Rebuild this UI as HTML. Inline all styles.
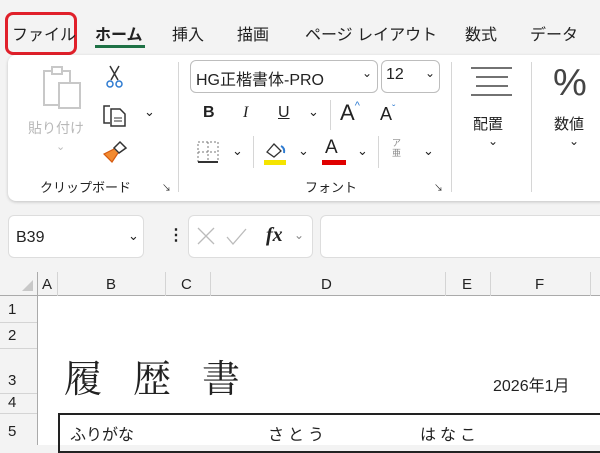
<!DOCTYPE html>
<html><head><meta charset="utf-8"><style>
*{margin:0;padding:0;box-sizing:border-box}
body{width:600px;height:445px;overflow:hidden;background:#f3f3f3;font-family:"Liberation Sans","Noto Sans CJK JP",sans-serif;color:#222;position:relative}
.a{position:absolute;white-space:nowrap}
.tab{font-size:16px;top:21px}
.sep{position:absolute;width:1px;background:#d6d6d6}
.box{position:absolute;background:#fff;border:1px solid #bdbdbd;border-radius:6px}
.hl{position:absolute;background:#d4d4d4}
</style></head><body>
<div class="a" style="left:5px;top:12px;width:72px;height:43px;border:3px solid #e0202a;border-radius:8px"></div>
<div class="a tab" style="left:12px">ファイル</div>
<div class="a tab" style="left:95px;font-weight:bold">ホーム</div>
<div class="a" style="left:95px;top:45px;width:50px;height:3px;background:#1e7145"></div>
<div class="a tab" style="left:172px">挿入</div>
<div class="a tab" style="left:237px">描画</div>
<div class="a tab" style="left:305px">ページ レイアウト</div>
<div class="a tab" style="left:465px">数式</div>
<div class="a tab" style="left:530px">データ</div>
<div class="a" style="left:8px;top:55px;width:600px;height:146px;background:#fff;border-radius:8px;box-shadow:0 1px 3px rgba(0,0,0,.2)"></div>
<div class="sep" style="left:178px;top:62px;height:130px"></div>
<div class="sep" style="left:451px;top:62px;height:130px"></div>
<div class="sep" style="left:531px;top:62px;height:130px"></div>
<svg class="a" style="left:40px;top:65px" width="45" height="45"><rect x="4" y="6" width="26" height="34" fill="none" stroke="#c8c8c8" stroke-width="2"/><rect x="12" y="2" width="10" height="7" fill="#fff" stroke="#c8c8c8" stroke-width="2"/><rect x="19" y="18" width="21" height="25" fill="#fff" stroke="#c8c8c8" stroke-width="2"/></svg>
<div class="a" style="left:28px;top:118px;font-size:14px;color:#b8b8b8">貼り付け</div>
<div class="a" style="left:56px;top:140px;font-size:11px;color:#bbb">⌄</div>
<svg class="a" style="left:104px;top:65px" width="22" height="24"><path d="M6 1 L14 15 M15 1 L7 15" stroke="#333" stroke-width="1.5" fill="none"/><circle cx="6" cy="19" r="3" fill="none" stroke="#2e7bd1" stroke-width="1.5"/><circle cx="15" cy="19" r="3" fill="none" stroke="#2e7bd1" stroke-width="1.5"/></svg>
<svg class="a" style="left:102px;top:103px" width="26" height="24"><path d="M8 3 H2 V20 H8" fill="none" stroke="#333" stroke-width="1.5"/><path d="M9 6 H18 L23 11 V23 H9 Z" fill="#fff" stroke="#333" stroke-width="1.5"/><path d="M12 15 H20 M12 18 H20" stroke="#333"/></svg>
<div class="a" style="left:144px;top:104px;font-size:13px">⌄</div>
<svg class="a" style="left:102px;top:140px" width="26" height="24"><path d="M18 2 L24 8 L17 13 L12 8 Z" fill="#fff" stroke="#333" stroke-width="1.5"/><path d="M12 9 L2 14 L10 22 L16 13" fill="#f28a30" stroke="#d55a10" stroke-width="1.2"/></svg>
<div class="a" style="left:40px;top:177px;font-size:13px">クリップボード</div>
<div class="a" style="left:162px;top:181px;font-size:9px">↘</div>
<div class="box" style="left:190px;top:60px;width:188px;height:33px"></div>
<div class="a" style="left:196px;top:66px;font-size:16px">HG正楷書体-PRO</div>
<div class="a" style="left:362px;top:66px;font-size:12px">⌄</div>
<div class="box" style="left:381px;top:60px;width:59px;height:33px"></div>
<div class="a" style="left:386px;top:66px;font-size:16px">12</div>
<div class="a" style="left:425px;top:66px;font-size:12px">⌄</div>
<div class="a" style="left:203px;top:104px;font-size:16px;font-weight:bold">B</div>
<div class="a" style="left:243px;top:104px;font-size:16px;font-style:italic;font-family:'Liberation Serif',serif">I</div>
<div class="a" style="left:278px;top:104px;font-size:16px;text-decoration:underline">U</div>
<div class="a" style="left:308px;top:104px;font-size:13px">⌄</div>
<div class="sep" style="left:330px;top:100px;height:30px"></div>
<div class="a" style="left:340px;top:100px;font-size:22px">A<span style="font-size:11px;color:#2e7bd1;vertical-align:top">^</span></div>
<div class="a" style="left:380px;top:104px;font-size:18px">A<span style="font-size:10px;color:#2e7bd1;vertical-align:top">ˇ</span></div>
<svg class="a" style="left:196px;top:140px" width="24" height="24"><rect x="2" y="2" width="20" height="20" fill="none" stroke="#777" stroke-dasharray="2 2"/><path d="M12 2 V22 M2 12 H22" stroke="#777" stroke-dasharray="2 2"/><path d="M2 22 H22" stroke="#333" stroke-width="2"/></svg>
<div class="a" style="left:232px;top:143px;font-size:13px">⌄</div>
<div class="sep" style="left:253px;top:136px;height:32px"></div>
<svg class="a" style="left:262px;top:140px" width="28" height="26"><path d="M5 12 L12 4 L19 11 L12 17 Z" fill="#fff" stroke="#333" stroke-width="1.3"/><path d="M19 6 q4 2 3 7" stroke="#2e7bd1" stroke-width="2" fill="none"/><rect x="2" y="20" width="22" height="5" fill="#f5e400"/></svg>
<div class="a" style="left:298px;top:143px;font-size:13px">⌄</div>
<div class="a" style="left:325px;top:137px;font-size:19px">A</div>
<div class="a" style="left:322px;top:160px;width:24px;height:5px;background:#e00000"></div>
<div class="a" style="left:357px;top:143px;font-size:13px">⌄</div>
<div class="sep" style="left:378px;top:136px;height:32px"></div>
<div class="a" style="left:392px;top:138px;font-size:9px;line-height:10px;color:#888">ア<br>亜</div>
<div class="a" style="left:423px;top:143px;font-size:13px">⌄</div>
<div class="a" style="left:305px;top:177px;font-size:13px">フォント</div>
<div class="a" style="left:434px;top:181px;font-size:9px">↘</div>
<svg class="a" style="left:470px;top:65px" width="44" height="36"><path d="M1 3 H42 M6 12 H38 M6 21 H38 M1 30 H42" stroke="#444" stroke-width="1.6"/></svg>
<div class="a" style="left:473px;top:113px;font-size:15px">配置</div>
<div class="a" style="left:488px;top:134px;font-size:12px">⌄</div>
<div class="a" style="left:553px;top:62px;font-size:38px;font-weight:300;color:#444">%</div>
<div class="a" style="left:554px;top:113px;font-size:15px">数値</div>
<div class="a" style="left:569px;top:134px;font-size:12px">⌄</div>
<div class="box" style="left:8px;top:215px;width:136px;height:43px;border-color:#ddd"></div>
<div class="a" style="left:16px;top:229px;font-size:16px">B39</div>
<div class="a" style="left:128px;top:228px;font-size:13px">⌄</div>
<div class="a" style="left:168px;top:225px;font-size:16px;font-weight:bold">⋮</div>
<div class="box" style="left:188px;top:215px;width:125px;height:43px;border-color:#ddd"></div>
<svg class="a" style="left:196px;top:226px" width="60" height="22"><path d="M2 2 L18 18 M18 2 L2 18" stroke="#bbb" stroke-width="1.3"/><path d="M31 11 L37 18 L50 3" stroke="#bbb" stroke-width="1.3" fill="none"/></svg>
<div class="a" style="left:266px;top:224px;font-size:20px;font-style:italic;font-weight:bold;font-family:'Liberation Serif',serif">fx</div>
<div class="a" style="left:294px;top:228px;font-size:12px;color:#888">⌄</div>
<div class="box" style="left:320px;top:215px;width:290px;height:43px;border-color:#ddd"></div>
<div class="a" style="left:0;top:272px;width:600px;height:24px;background:#f3f3f3"></div>
<div class="a" style="left:38px;top:296px;width:562px;height:149px;background:#fff"></div>
<div class="hl" style="left:0;top:295px;width:600px;height:1px;background:#aaa"></div>
<div class="hl" style="left:37px;top:272px;width:1px;height:173px;background:#aaa"></div>
<svg class="a" style="left:22px;top:280px" width="12" height="12"><path d="M11 0 V11 H0 Z" fill="#c8c8c8"/></svg>
<div class="hl" style="left:57px;top:272px;width:1px;height:24px"></div>
<div class="hl" style="left:165px;top:272px;width:1px;height:24px"></div>
<div class="hl" style="left:210px;top:272px;width:1px;height:24px"></div>
<div class="hl" style="left:445px;top:272px;width:1px;height:24px"></div>
<div class="hl" style="left:490px;top:272px;width:1px;height:24px"></div>
<div class="hl" style="left:590px;top:272px;width:1px;height:24px"></div>
<div class="a" style="left:42px;top:276px;font-size:15px">A</div>
<div class="a" style="left:106px;top:276px;font-size:15px">B</div>
<div class="a" style="left:181px;top:276px;font-size:15px">C</div>
<div class="a" style="left:321px;top:276px;font-size:15px">D</div>
<div class="a" style="left:462px;top:276px;font-size:15px">E</div>
<div class="a" style="left:535px;top:276px;font-size:15px">F</div>
<div class="hl" style="left:0;top:322px;width:37px;height:1px"></div>
<div class="hl" style="left:0;top:348px;width:37px;height:1px"></div>
<div class="hl" style="left:0;top:393px;width:37px;height:1px"></div>
<div class="hl" style="left:0;top:413px;width:37px;height:1px"></div>
<div class="a" style="left:8px;top:301px;font-size:15px">1</div>
<div class="a" style="left:8px;top:327px;font-size:15px">2</div>
<div class="a" style="left:8px;top:372px;font-size:15px">3</div>
<div class="a" style="left:8px;top:394px;font-size:15px">4</div>
<div class="a" style="left:8px;top:423px;font-size:15px">5</div>
<div class="a" style="left:64px;top:348px;font-size:38px;font-family:'Noto Serif CJK SC','Liberation Serif',serif;letter-spacing:31px">履歴書</div>
<div class="a" style="left:493px;top:372px;font-size:16px">2026年1月</div>
<div class="a" style="left:58px;top:413px;width:560px;height:40px;border:2px solid #222"></div>
<div class="a" style="left:70px;top:421px;font-size:16px">ふりがな</div>
<div class="a" style="left:268px;top:421px;font-size:16px;letter-spacing:4px">さとう</div>
<div class="a" style="left:420px;top:421px;font-size:16px;letter-spacing:4px">はなこ</div>
</body></html>
